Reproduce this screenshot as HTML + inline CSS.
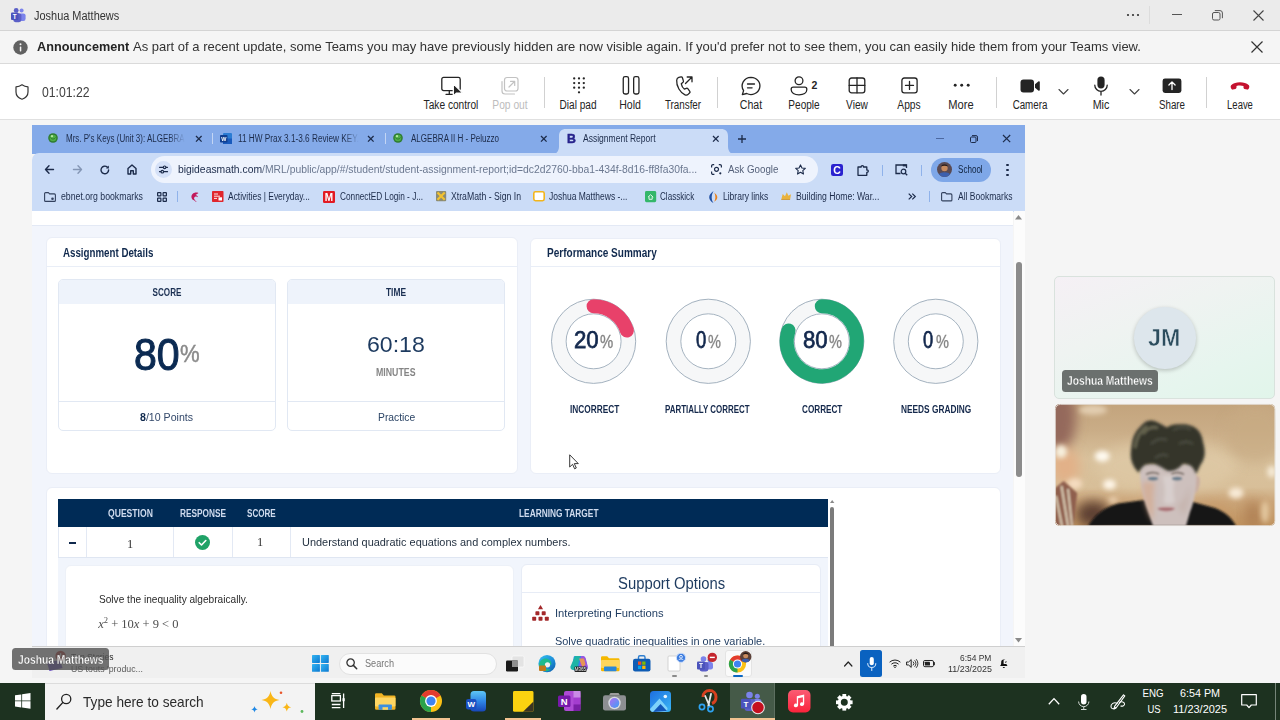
<!DOCTYPE html>
<html lang="en">
<head>
<meta charset="utf-8">
<title>Joshua Matthews</title>
<style>
*{box-sizing:border-box;margin:0;padding:0}
html,body{width:1280px;height:720px;overflow:hidden;background:#f5f5f5;font-family:"Liberation Sans",sans-serif;color:#242424}
.abs{position:absolute}
.t{position:absolute;white-space:nowrap;line-height:1}
svg{position:absolute;overflow:visible}
.clip{position:absolute;left:0;top:0;width:1280px;overflow:hidden}
.blur{filter:blur(.45px)}
</style>
</head>
<body>
<div class="abs" style="left:0px;top:0px;width:1280px;height:30px;background:#ebebeb;"></div>
<div class="abs" style="left:0px;top:30px;width:1280px;height:1px;background:#d4d4d4;"></div>
<svg style="left:11px;top:8px;" width="15" height="15" viewBox="0 0 15 15"><circle cx="10.6" cy="2.6" r="2" fill="#7b83eb"/><circle cx="5.2" cy="2.4" r="2.4" fill="#5b5fc7"/><rect x="8" y="5.4" width="6.6" height="7.6" rx="2.2" fill="#7b83eb"/><rect x="2.2" y="5.2" width="8.2" height="9" rx="2.4" fill="#5b5fc7"/><rect x="0" y="4.6" width="7.4" height="7.4" rx="1" fill="#4b53bc"/><text x="3.7" y="10.6" font-size="6.4" font-weight="700" fill="#fff" text-anchor="middle" font-family="Liberation Sans, sans-serif">T</text></svg>
<span class="t" style="top:10.20px;font-size:12.5px;color:#333;left:34px;transform-origin:0 50%;transform:scaleX(0.8763);">Joshua Matthews</span>
<svg style="left:1126px;top:13px;" width="14" height="4" viewBox="0 0 14 4"><circle cx="2" cy="2" r="1.1" fill="#333"/><circle cx="7" cy="2" r="1.1" fill="#333"/><circle cx="12" cy="2" r="1.1" fill="#333"/></svg>
<div class="abs" style="left:1149px;top:6px;width:1px;height:18px;background:#dcdcdc;"></div>
<div class="abs" style="left:1172px;top:14px;width:10px;height:1px;background:#555;"></div>
<svg style="left:1212px;top:10px;" width="11" height="11" viewBox="0 0 11 11"><rect x="0.5" y="2.5" width="7.5" height="7.5" rx="1.5" fill="none" stroke="#555" stroke-width="1"/><path d="M2.8 .6h5.2a2.4 2.4 0 0 1 2.4 2.4v5.2" fill="none" stroke="#555" stroke-width="1"/></svg>
<svg style="left:1253px;top:10px;" width="11" height="11" viewBox="0 0 11 11"><path d="M.5 .5l10 10M10.5 .5l-10 10" stroke="#444" stroke-width="1.1" fill="none"/></svg>
<div class="abs" style="left:0px;top:31px;width:1280px;height:32px;background:#f5f5f5;"></div>
<div class="abs" style="left:0px;top:63px;width:1280px;height:1px;background:#dadada;"></div>
<svg style="left:13px;top:40px;" width="15" height="15" viewBox="0 0 15 15"><circle cx="7.5" cy="7.5" r="7.2" fill="#616161"/><rect x="6.8" y="6.4" width="1.5" height="5" rx=".6" fill="#f5f5f5"/><circle cx="7.5" cy="4.2" r="1" fill="#f5f5f5"/></svg>
<span class="t" style="top:40.41px;font-size:13.5px;color:#242424;font-weight:700;left:37px;transform-origin:0 50%;transform:scaleX(0.9388);">Announcement</span>
<span class="t" style="top:40.41px;font-size:13.5px;color:#333;left:133px;transform-origin:0 50%;transform:scaleX(0.9637);">As part of a recent update, some Teams you may have previously hidden are now visible again. If you'd prefer not to see them, you can easily hide them from your Teams view.</span>
<svg style="left:1251px;top:41px;" width="12" height="12" viewBox="0 0 12 12"><path d="M.5 .5l11 11M11.5 .5l-11 11" stroke="#333" stroke-width="1.2" fill="none"/></svg>
<div class="abs" style="left:0px;top:64px;width:1280px;height:55px;background:#fff;"></div>
<div class="abs" style="left:0px;top:119px;width:1280px;height:1px;background:#e0e0e0;"></div>
<svg style="left:14.5px;top:84.2px;" width="14" height="16" viewBox="0 0 14 16"><path d="M7 .8c1.8 1.3 3.8 2 6 2.1v5c0 3.5-2.300 6-6 7.300-3.700-1.300-6-3.800-6-7.300v-5c2.200-.1 4.200-.8 6-2.100z" fill="none" stroke="#333" stroke-width="1.2" stroke-linejoin="round"/></svg>
<span class="t" style="top:85.37px;font-size:14px;color:#424242;left:42px;transform-origin:0 50%;transform:scaleX(0.8727);">01:01:22</span>
<svg style="left:439px;top:73.5px;" width="24" height="24" viewBox="0 0 24 24"><rect x="2.800" y="3.400" width="18.400" height="13.200" rx="1.800" fill="none" stroke="#242424" stroke-width="1.3" stroke-linecap="round" stroke-linejoin="round"/><path d="M7 20.300h7M10.300 16.800v3.500" fill="none" stroke="#242424" stroke-width="1.3" stroke-linecap="round" stroke-linejoin="round"/><path d="M14.300 9.900v12.200l3.300-3h6.200z" fill="#242424" stroke="#fff" stroke-width="1.300" stroke-linejoin="round"/></svg>
<span class="t" style="top:99.14px;font-size:12px;color:#242424;left:451px;transform-origin:50% 50%;transform:translateX(-50%) scaleX(0.8462);">Take control</span>
<svg style="left:498px;top:73.5px;" width="24" height="24" viewBox="0 0 24 24"><rect x="6.500" y="3.500" width="13.500" height="13.500" rx="2.500" fill="none" stroke="#c2c2c2" stroke-width="1.2" stroke-linecap="round" stroke-linejoin="round"/><path d="M4 7.500v9.500a3 3 0 0 0 3 3h9.500" fill="none" stroke="#c2c2c2" stroke-width="1.2" stroke-linecap="round" stroke-linejoin="round"/><path d="M11 13l5.500-5.500M12.500 7.300h4.200v4.200" fill="none" stroke="#c2c2c2" stroke-width="1.2" stroke-linecap="round" stroke-linejoin="round"/></svg>
<span class="t" style="top:99.14px;font-size:12px;color:#bdbdbd;left:510px;transform-origin:50% 50%;transform:translateX(-50%) scaleX(0.8537);">Pop out</span>
<div class="abs" style="left:544px;top:77px;width:1px;height:31px;background:#d1d1d1;"></div>
<svg style="left:566px;top:73.5px;" width="24" height="24" viewBox="0 0 24 24"><circle cx="8.2" cy="4.4" r="1.150" fill="#242424"/><circle cx="8.2" cy="9.05" r="1.150" fill="#242424"/><circle cx="8.2" cy="13.7" r="1.150" fill="#242424"/><circle cx="13" cy="4.4" r="1.150" fill="#242424"/><circle cx="13" cy="9.05" r="1.150" fill="#242424"/><circle cx="13" cy="13.7" r="1.150" fill="#242424"/><circle cx="17.8" cy="4.4" r="1.150" fill="#242424"/><circle cx="17.8" cy="9.05" r="1.150" fill="#242424"/><circle cx="17.8" cy="13.7" r="1.150" fill="#242424"/><circle cx="13" cy="18.350" r="1.150" fill="#242424"/></svg>
<span class="t" style="top:99.14px;font-size:12px;color:#242424;left:578px;transform-origin:50% 50%;transform:translateX(-50%) scaleX(0.8409);">Dial pad</span>
<svg style="left:618px;top:73.5px;" width="24" height="24" viewBox="0 0 24 24"><rect x="5.250" y="2.600" width="5.300" height="17.400" rx="1.800" fill="none" stroke="#242424" stroke-width="1.3" stroke-linecap="round" stroke-linejoin="round"/><rect x="15.650" y="2.600" width="5.300" height="17.400" rx="1.800" fill="none" stroke="#242424" stroke-width="1.3" stroke-linecap="round" stroke-linejoin="round"/></svg>
<span class="t" style="top:99.14px;font-size:12px;color:#242424;left:630px;transform-origin:50% 50%;transform:translateX(-50%) scaleX(0.8800);">Hold</span>
<svg style="left:671px;top:73.5px;" width="24" height="24" viewBox="0 0 24 24"><path d="M7.800 3.400l2.300-.5c.6-.1 1.100.2 1.300.8l1 3.200c.2.500 0 1-.4 1.400l-1.700 1.500c.5 2.500 1.500 4.200 3 5.300l2.100-.8c.5-.2 1.100 0 1.400.4l2 2.600c.4.500.3 1.100-.1 1.500l-1.300 1.300c-.9.900-2.200 1.200-3.400.7-4.700-1.900-8.800-8.700-8.300-14.500.1-1.400 1-2.500 2.100-2.900z" fill="none" stroke="#242424" stroke-width="1.3" stroke-linecap="round" stroke-linejoin="round"/><path d="M14.500 9.500l6.500-6.500M16.200 3h4.800v4.800" fill="none" stroke="#242424" stroke-width="1.3" stroke-linecap="round" stroke-linejoin="round"/></svg>
<span class="t" style="top:99.14px;font-size:12px;color:#242424;left:683px;transform-origin:50% 50%;transform:translateX(-50%) scaleX(0.8182);">Transfer</span>
<div class="abs" style="left:717px;top:77px;width:1px;height:31px;background:#d1d1d1;"></div>
<svg style="left:739px;top:73.5px;" width="24" height="24" viewBox="0 0 24 24"><path d="M12 3.300a9 8.600 0 1 1-4.300 16.200l-4.400 1.200 1.300-4.100a9 8.600 0 0 1 7.400-13.300z" fill="none" stroke="#242424" stroke-width="1.3" stroke-linecap="round" stroke-linejoin="round"/><path d="M8.500 10h7M8.500 13.800h4.600" fill="none" stroke="#242424" stroke-width="1.3" stroke-linecap="round" stroke-linejoin="round"/></svg>
<span class="t" style="top:99.14px;font-size:12px;color:#242424;left:751px;transform-origin:50% 50%;transform:translateX(-50%) scaleX(0.8800);">Chat</span>
<svg style="left:787px;top:73.5px;" width="24" height="24" viewBox="0 0 24 24"><circle cx="12" cy="6.800" r="3.900" fill="none" stroke="#242424" stroke-width="1.3" stroke-linecap="round" stroke-linejoin="round"/><path d="M6.200 13.200h11.600a2 2 0 0 1 2 2v.6c0 3-3.200 5-7.800 5s-7.800-2-7.800-5v-.6a2 2 0 0 1 2-2z" fill="none" stroke="#242424" stroke-width="1.3" stroke-linecap="round" stroke-linejoin="round"/></svg>
<span class="t" style="top:79.88px;font-size:10.5px;color:#242424;font-weight:700;left:814.5px;transform-origin:50% 50%;transform:translateX(-50%) scaleX(1.0000);">2</span>
<span class="t" style="top:99.14px;font-size:12px;color:#242424;left:804px;transform-origin:50% 50%;transform:translateX(-50%) scaleX(0.8378);">People</span>
<svg style="left:845px;top:73.5px;" width="24" height="24" viewBox="0 0 24 24"><rect x="4.200" y="4" width="15.600" height="14.800" rx="2.400" fill="none" stroke="#242424" stroke-width="1.3" stroke-linecap="round" stroke-linejoin="round"/><path d="M12 4v14.800M4.200 11.400h15.600" fill="none" stroke="#242424" stroke-width="1.3" stroke-linecap="round" stroke-linejoin="round"/></svg>
<span class="t" style="top:99.14px;font-size:12px;color:#242424;left:857px;transform-origin:50% 50%;transform:translateX(-50%) scaleX(0.8462);">View</span>
<svg style="left:897px;top:73.5px;" width="24" height="24" viewBox="0 0 24 24"><rect x="4.900" y="4" width="15.200" height="14.800" rx="2.400" fill="none" stroke="#242424" stroke-width="1.3" stroke-linecap="round" stroke-linejoin="round"/><path d="M12.500 7.400v8M8.500 11.400h8" fill="none" stroke="#242424" stroke-width="1.3" stroke-linecap="round" stroke-linejoin="round"/></svg>
<span class="t" style="top:99.14px;font-size:12px;color:#242424;left:909px;transform-origin:50% 50%;transform:translateX(-50%) scaleX(0.8519);">Apps</span>
<svg style="left:949px;top:73.5px;" width="24" height="24" viewBox="0 0 24 24"><circle cx="6.200" cy="11.300" r="1.450" fill="#242424"/><circle cx="12.700" cy="11.300" r="1.450" fill="#242424"/><circle cx="19.200" cy="11.300" r="1.450" fill="#242424"/></svg>
<span class="t" style="top:99.14px;font-size:12px;color:#242424;left:961px;transform-origin:50% 50%;transform:translateX(-50%) scaleX(0.9259);">More</span>
<div class="abs" style="left:996px;top:77px;width:1px;height:31px;background:#d1d1d1;"></div>
<svg style="left:1018px;top:73.5px;" width="24" height="24" viewBox="0 0 24 24"><rect x="2.500" y="5.400" width="13.500" height="13.200" rx="3" fill="#242424"/><path d="M17 10.200l3.600-2.900c.5-.4 1.200 0 1.200.6v8.200c0 .6-.7 1-1.200.6l-3.600-2.900z" fill="#242424"/></svg>
<span class="t" style="top:99.14px;font-size:12px;color:#242424;left:1030px;transform-origin:50% 50%;transform:translateX(-50%) scaleX(0.8140);">Camera</span>
<svg style="left:1058px;top:88px;" width="11" height="8" viewBox="0 0 11 8"><path d="M1 1.500l4.500 4.500 4.500-4.500" fill="none" stroke="#424242" stroke-width="1.100" stroke-linecap="round" stroke-linejoin="round"/></svg>
<svg style="left:1089px;top:73.5px;" width="24" height="24" viewBox="0 0 24 24"><rect x="8.400" y="2.400" width="7.200" height="12" rx="3.600" fill="#242424"/><path d="M5.800 11.200a6.200 6.200 0 0 0 12.400 0M12 17.600v3.400" fill="none" stroke="#242424" stroke-width="1.3" stroke-linecap="round" stroke-linejoin="round"/></svg>
<span class="t" style="top:99.14px;font-size:12px;color:#242424;left:1101px;transform-origin:50% 50%;transform:translateX(-50%) scaleX(0.8947);">Mic</span>
<svg style="left:1129px;top:88px;" width="11" height="8" viewBox="0 0 11 8"><path d="M1 1.500l4.500 4.500 4.500-4.500" fill="none" stroke="#424242" stroke-width="1.100" stroke-linecap="round" stroke-linejoin="round"/></svg>
<svg style="left:1160px;top:73.5px;" width="24" height="24" viewBox="0 0 24 24"><rect x="2.600" y="4.600" width="18.800" height="14.400" rx="2.400" fill="#242424"/><path d="M12 15.600v-7.400M8.900 11l3.100-3.100 3.100 3.100" fill="none" stroke="#fff" stroke-width="1.300" stroke-linecap="round" stroke-linejoin="round"/></svg>
<span class="t" style="top:99.14px;font-size:12px;color:#242424;left:1172px;transform-origin:50% 50%;transform:translateX(-50%) scaleX(0.8125);">Share</span>
<div class="abs" style="left:1206px;top:77px;width:1px;height:31px;background:#d1d1d1;"></div>
<svg style="left:1228px;top:73.5px;" width="24" height="24" viewBox="0 0 24 24"><path d="M12 8.200c-3.600 0-6.600.9-8.600 2.700-.7.600-.9 1.600-.6 2.500l.5 1.400c.2.600.9 1 1.500.8l2.700-.7c.6-.2 1-.7 1-1.300v-1.700c1.100-.4 2.300-.5 3.500-.5s2.400.2 3.500.5v1.700c0 .6.400 1.200 1 1.300l2.700.7c.6.200 1.300-.2 1.500-.8l.5-1.400c.3-.9.100-1.900-.6-2.500-2-1.800-5-2.700-8.600-2.700z" fill="#c4122f"/></svg>
<span class="t" style="top:99.14px;font-size:12px;color:#242424;left:1240px;transform-origin:50% 50%;transform:translateX(-50%) scaleX(0.7879);">Leave</span>
<div class="blur"><div class="abs" style="left:32px;top:125px;width:993px;height:29px;background:#84aae9;"></div>
<div class="abs" style="left:32px;top:153px;width:993px;height:58.5px;background:#cbdcf7;border-radius:7px 0 0 0;"></div>
<svg style="left:48px;top:133px;" width="10" height="10" viewBox="0 0 10 10"><circle cx="5" cy="5" r="4.800" fill="#2f7d32"/><circle cx="5" cy="5" r="3.300" fill="#4fae45"/><path d="M2.500 4.500c1.200 2 3.800 2 5 0" stroke="#2c7a2c" stroke-width="1" fill="none"/><circle cx="4" cy="3.200" r="1.100" fill="#b6e8a6"/></svg>
<span class="t" style="top:134.02px;font-size:10px;color:#1c2b4a;left:65.5px;transform-origin:0 50%;transform:scaleX(0.7987);-webkit-mask-image:linear-gradient(90deg,#000 86%,transparent);mask-image:linear-gradient(90deg,#000 86%,transparent);">Mrs. P's Keys (Unit 3): ALGEBRA</span>
<svg style="left:195.7px;top:136.1px;" width="5.6" height="5.6" viewBox="0 0 5.6 5.6"><path d="M0 0L5.6 5.6M5.6 0L0 5.6" stroke="#1c2b4a" stroke-width="1.3" fill="none"/></svg>
<div class="abs" style="left:212px;top:133px;width:1px;height:11px;background:#c3d5f4;"></div>
<svg style="left:220px;top:133px;" width="12" height="11" viewBox="0 0 12 11"><rect x="3" y="0" width="9" height="11" rx="1" fill="#2b7cd3"/><rect x="3" y="5.500" width="9" height="5.500" fill="#185abd"/><rect x="0" y="2" width="7.500" height="7.500" rx=".8" fill="#103f91"/><text x="3.750" y="8" font-size="5.500" font-weight="700" fill="#fff" text-anchor="middle" font-family="Liberation Sans, sans-serif">W</text></svg>
<span class="t" style="top:134.02px;font-size:10px;color:#1c2b4a;left:238px;transform-origin:0 50%;transform:scaleX(0.8231);-webkit-mask-image:linear-gradient(90deg,#000 88%,transparent);mask-image:linear-gradient(90deg,#000 88%,transparent);">11 HW Prax 3.1-3.6 Review KEY.</span>
<svg style="left:368.2px;top:136.1px;" width="5.6" height="5.6" viewBox="0 0 5.6 5.6"><path d="M0 0L5.6 5.6M5.6 0L0 5.6" stroke="#1c2b4a" stroke-width="1.3" fill="none"/></svg>
<div class="abs" style="left:385px;top:133px;width:1px;height:11px;background:#c3d5f4;"></div>
<svg style="left:393px;top:133px;" width="10" height="10" viewBox="0 0 10 10"><circle cx="5" cy="5" r="4.800" fill="#2f7d32"/><circle cx="5" cy="5" r="3.300" fill="#4fae45"/><path d="M2.500 4.500c1.200 2 3.800 2 5 0" stroke="#2c7a2c" stroke-width="1" fill="none"/><circle cx="4" cy="3.200" r="1.100" fill="#b6e8a6"/></svg>
<span class="t" style="top:134.02px;font-size:10px;color:#1c2b4a;left:410.5px;transform-origin:0 50%;transform:scaleX(0.8045);">ALGEBRA II H - Peluzzo</span>
<svg style="left:540.7px;top:136.1px;" width="5.6" height="5.6" viewBox="0 0 5.6 5.6"><path d="M0 0L5.6 5.6M5.6 0L0 5.6" stroke="#1c2b4a" stroke-width="1.3" fill="none"/></svg>
<svg style="left:551px;top:128.5px;" width="185" height="25.5" viewBox="0 0 185 25.5"><path d="M0 25.500c5 0 8-3 8-8v-10.500c0-4.500 2.500-7 7-7h155c4.500 0 7 2.500 7 7v10.500c0 5 3 8 8 8z" fill="#cbdcf7"/></svg>
<span class="t" style="top:132.26px;font-size:13px;color:#27238c;font-weight:700;left:566.8px;transform-origin:0 50%;transform:scaleX(0.9444);-webkit-text-stroke:.5px #27238c;">B</span>
<span class="t" style="top:134.02px;font-size:10px;color:#1c2b4a;left:583px;transform-origin:0 50%;transform:scaleX(0.8529);">Assignment Report</span>
<svg style="left:713.2px;top:136.1px;" width="5.6" height="5.6" viewBox="0 0 5.6 5.6"><path d="M0 0L5.6 5.6M5.6 0L0 5.6" stroke="#1c2b4a" stroke-width="1.3" fill="none"/></svg>
<svg style="left:738px;top:134.5px;" width="8" height="8" viewBox="0 0 8 8"><path d="M4 0v8M0 4h8" stroke="#1c2b4a" stroke-width="1.300" fill="none"/></svg>
<div class="abs" style="left:936px;top:137.5px;width:8px;height:1px;background:#4c68a0;"></div>
<svg style="left:969.5px;top:134.5px;" width="8" height="8" viewBox="0 0 8 8"><rect x=".5" y="2" width="5.500" height="5.500" rx="1" fill="none" stroke="#1c2b4a" stroke-width="1"/><path d="M2 .6h4a1.500 1.500 0 0 1 1.500 1.500v4" fill="none" stroke="#1c2b4a" stroke-width="1"/></svg>
<svg style="left:1003.4px;top:135.3px;" width="7.2" height="7.2" viewBox="0 0 7.2 7.2"><path d="M0 0L7.2 7.2M7.2 0L0 7.2" stroke="#1c2b4a" stroke-width="1.2" fill="none"/></svg>
<svg style="left:45px;top:165px;" width="9" height="9" viewBox="0 0 9 9"><path d="M8.500 4.500h-8M4 .8L.5 4.500 4 8.200" fill="none" stroke="#1c2b4a" stroke-width="1.400" stroke-linecap="round" stroke-linejoin="round"/></svg>
<svg style="left:72.5px;top:165px;" width="9" height="9" viewBox="0 0 9 9"><path d="M.5 4.500h8M5 .8l3.500 3.700L5 8.200" fill="none" stroke="#8496b5" stroke-width="1.400" stroke-linecap="round" stroke-linejoin="round"/></svg>
<svg style="left:100px;top:164.5px;" width="10" height="10" viewBox="0 0 10 10"><path d="M8.600 5a3.800 3.800 0 1 1-1.300-2.900" fill="none" stroke="#1c2b4a" stroke-width="1.400" stroke-linecap="round" stroke-linejoin="round"/><path d="M8.900 .6v2.800h-2.800z" fill="#1c2b4a"/></svg>
<svg style="left:127px;top:164px;" width="10" height="11" viewBox="0 0 10 11"><path d="M1 4.600L5 1l4 3.600v5.400h-2.700v-3.200h-2.600v3.200h-2.700z" fill="none" stroke="#1c2b4a" stroke-width="1.400" stroke-linecap="round" stroke-linejoin="round"/></svg>
<div class="abs" style="left:151px;top:156px;width:667px;height:27px;background:#eef3fd;border-radius:13.500px;"></div>
<svg style="left:154.5px;top:161px;" width="17" height="17" viewBox="0 0 17 17"><circle cx="8.500" cy="8.500" r="8.500" fill="#d5e1f8"/><path d="M4.500 6.300h3.500M11.300 6.300h1.200M4.500 10.700h1.200M9 10.700h3.500" stroke="#1c2b4a" stroke-width="1.200" stroke-linecap="round"/><circle cx="9.600" cy="6.300" r="1.300" fill="none" stroke="#1c2b4a" stroke-width="1.100"/><circle cx="7.300" cy="10.700" r="1.300" fill="none" stroke="#1c2b4a" stroke-width="1.100"/></svg>
<span class="t" style="top:164.13px;font-size:11px;color:#6b7890;left:178px;transform-origin:0 50%;transform:scaleX(0.9411);"><span style="color:#1c2b4a">bigideasmath.com</span>/MRL/public/app/#/student/student-assignment-report;id=dc2d2760-bba1-434f-8d16-ff8fa30fa...</span>
<svg style="left:710.5px;top:164px;" width="11" height="11" viewBox="0 0 11 11"><path d="M.6 3.400v-1.400a1.400 1.400 0 0 1 1.400-1.400h1.200M7.800 .6h1.200a1.400 1.400 0 0 1 1.400 1.400v1.400M.6 7.600v1.400a1.400 1.400 0 0 0 1.400 1.400h1.400" fill="none" stroke="#1c2b4a" stroke-width="1.200"/><circle cx="5.500" cy="5.300" r="2" fill="none" stroke="#1c2b4a" stroke-width="1.200"/><circle cx="9.300" cy="9.300" r="1.100" fill="#1c2b4a"/></svg>
<span class="t" style="top:164.13px;font-size:11px;color:#55617a;left:727.5px;transform-origin:0 50%;transform:scaleX(0.8860);">Ask Google</span>
<svg style="left:794.5px;top:164px;" width="11" height="11" viewBox="0 0 11 11"><path d="M5.500 .9l1.450 3.100 3.350.4-2.500 2.300.68 3.350-2.980-1.700-2.980 1.700.68-3.350-2.500-2.300 3.350-.4z" fill="none" stroke="#1c2b4a" stroke-width="1.100" stroke-linejoin="round"/></svg>
<svg style="left:830.5px;top:163.5px;" width="12" height="12" viewBox="0 0 12 12"><rect width="12" height="12" rx="2.200" fill="#2a22cf"/><text x="6" y="9.600" font-size="10.500" font-weight="700" fill="#fff" text-anchor="middle" font-family="Liberation Sans, sans-serif">C</text></svg>
<svg style="left:857px;top:163.5px;" width="13" height="12" viewBox="0 0 13 12"><path d="M1 3h3.200c-.5-1.800 2.800-1.800 2.300 0h3.300v3c1.900-.5 1.900 2.800 0 2.300v3h-8.800z" fill="none" stroke="#1c2b4a" stroke-width="1.300" stroke-linejoin="round"/></svg>
<div class="abs" style="left:882px;top:164.5px;width:1px;height:11px;background:#8fb2ea;"></div>
<svg style="left:895px;top:164px;" width="13" height="12" viewBox="0 0 13 12"><path d="M5.500 9.500h-4.500v-8.500h10.500v3" fill="none" stroke="#1c2b4a" stroke-width="1.300"/><rect x="7.800" y=".4" width="3.800" height="2" fill="#1c2b4a"/><circle cx="8.500" cy="7.500" r="2.300" fill="none" stroke="#1c2b4a" stroke-width="1.200"/><path d="M10.200 9.200l2 2" stroke="#1c2b4a" stroke-width="1.300"/></svg>
<div class="abs" style="left:921px;top:164.5px;width:1px;height:11px;background:#8fb2ea;"></div>
<div class="abs" style="left:930.5px;top:157.5px;width:60.5px;height:24.5px;background:#7ea7e8;border-radius:12.500px;"></div>
<svg style="left:937px;top:162px;" width="15" height="15" viewBox="0 0 15 15"><circle cx="7.500" cy="7.500" r="7.500" fill="#5a4a52"/><circle cx="7.500" cy="6" r="3.200" fill="#c78a5e"/><path d="M2 12.500c1-3 10-3 11 0a7.500 7.500 0 0 1-11 0z" fill="#3c5fae"/><path d="M4 4.500c1-3 6-3 7 0-2-1-5-1-7 0z" fill="#2a1d1a"/></svg>
<span class="t" style="top:164.62px;font-size:10px;color:#10233f;left:957.5px;transform-origin:0 50%;transform:scaleX(0.8065);">School</span>
<div class="abs" style="left:1006.3px;top:163.5px;width:2.4px;height:2.4px;background:#1c2b4a;border-radius:50%;"></div>
<div class="abs" style="left:1006.3px;top:168.5px;width:2.4px;height:2.4px;background:#1c2b4a;border-radius:50%;"></div>
<div class="abs" style="left:1006.3px;top:173.5px;width:2.4px;height:2.4px;background:#1c2b4a;border-radius:50%;"></div>
<svg style="left:43.5px;top:191.5px;" width="12" height="10" viewBox="0 0 12 10"><path d="M.6 1.600a1 1 0 0 1 1-1h2.800l1.200 1.300h4.800a1 1 0 0 1 1 1v5.500a1 1 0 0 1-1 1h-8.800a1 1 0 0 1-1-1z" fill="none" stroke="#33415e" stroke-width="1.100" stroke-linejoin="round"/><circle cx="8.500" cy="6.800" r="1.300" fill="#33415e"/></svg>
<span class="t" style="top:192.12px;font-size:10px;color:#1c2b4a;left:61px;transform-origin:0 50%;transform:scaleX(0.8723);">ebnet.org bookmarks</span>
<svg style="left:156.5px;top:191.5px;" width="10" height="10" viewBox="0 0 10 10"><rect x="0.6" y="0.6" width="3.300" height="3.300" rx=".5" fill="none" stroke="#1c2b4a" stroke-width="1.200"/><rect x="0.6" y="6.1" width="3.300" height="3.300" rx=".5" fill="none" stroke="#1c2b4a" stroke-width="1.200"/><rect x="6.1" y="0.6" width="3.300" height="3.300" rx=".5" fill="none" stroke="#1c2b4a" stroke-width="1.200"/><rect x="6.1" y="6.1" width="3.300" height="3.300" rx=".5" fill="none" stroke="#1c2b4a" stroke-width="1.200"/></svg>
<div class="abs" style="left:177px;top:191px;width:1px;height:11px;background:#8fb2ea;"></div>
<svg style="left:190.5px;top:191.5px;" width="8" height="10" viewBox="0 0 8 10"><path d="M7.500 1c-4-1.500-7.500 1-7 4.500.3 2 2 3.200 3.500 2.500-1.200-.8-1.300-2.600 0-3.300 1-.5 2.300-.2 3 .5-.3-1.200-1.300-2-2.500-2.100 1-.9 2.200-1.400 3-2.100z" fill="#c2185b"/><path d="M3.500 8.200l1.500 1.500" stroke="#c2185b" stroke-width="1"/></svg>
<svg style="left:212px;top:191px;" width="11.5" height="11" viewBox="0 0 11.5 11"><rect width="11.500" height="11" rx=".8" fill="#e0262d"/><path d="M2 3h4M2 5.200h6M2 7.400h3" stroke="#fff" stroke-width=".9"/><rect x="6.500" y="6.300" width="3.500" height="3.200" fill="#fff"/></svg>
<span class="t" style="top:192.12px;font-size:10px;color:#1c2b4a;left:227.5px;transform-origin:0 50%;transform:scaleX(0.8454);">Activities | Everyday...</span>
<svg style="left:323px;top:190.5px;" width="12" height="12" viewBox="0 0 12 12"><rect width="12" height="12" rx="1.200" fill="#e21b23"/><text x="6" y="9.800" font-size="10" font-weight="700" fill="#fff" text-anchor="middle" font-family="Liberation Sans, sans-serif">M</text></svg>
<span class="t" style="top:192.12px;font-size:10px;color:#1c2b4a;left:340px;transform-origin:0 50%;transform:scaleX(0.8267);">ConnectED Login - J...</span>
<svg style="left:435.8px;top:191.2px;" width="10.2" height="10.2" viewBox="0 0 10.2 10.2"><rect width="10.200" height="10.200" rx="1" fill="#8b8b74"/><path d="M1.500 1.500l7.200 7.200M8.700 1.500l-7.200 7.200" stroke="#f2c230" stroke-width="2.200"/></svg>
<span class="t" style="top:192.12px;font-size:10px;color:#1c2b4a;left:450.8px;transform-origin:0 50%;transform:scaleX(0.8691);">XtraMath - Sign In</span>
<svg style="left:532.5px;top:191px;" width="12" height="10.5" viewBox="0 0 12 10.5"><rect x=".8" y=".8" width="10.400" height="8.900" rx="1.600" fill="#fff" stroke="#f2b51d" stroke-width="1.600"/></svg>
<span class="t" style="top:192.12px;font-size:10px;color:#1c2b4a;left:548.8px;transform-origin:0 50%;transform:scaleX(0.8500);">Joshua Matthews -...</span>
<svg style="left:644.5px;top:190.8px;" width="11.2" height="11.2" viewBox="0 0 11.2 11.2"><rect width="11.200" height="11.200" rx="1.400" fill="#34b76a"/><path d="M3 6.200l2.600-2.500 2.600 2.500M4 5.500v2.800h3.200v-2.800" fill="none" stroke="#dff7e8" stroke-width="1"/></svg>
<span class="t" style="top:192.12px;font-size:10px;color:#1c2b4a;left:660px;transform-origin:0 50%;transform:scaleX(0.8095);">Classkick</span>
<svg style="left:708.8px;top:190.5px;" width="8.5" height="12" viewBox="0 0 8.5 12"><path d="M4.500 0c-2.500 1.800-4.300 3.800-4.300 6.300 0 2.400 1.700 4.500 4.300 5.700-1.200-1.600-1.800-3.400-1.800-5.500s.6-4.300 1.800-6.500z" fill="#1f4fa3"/><path d="M5.200 1.500c1.800 1.500 3.100 3 3.100 4.800s-1.200 3.400-3.100 4.400c.8-1.300 1.200-2.800 1.200-4.400s-.4-3.300-1.200-4.800z" fill="#e9811c"/></svg>
<span class="t" style="top:192.12px;font-size:10px;color:#1c2b4a;left:723px;transform-origin:0 50%;transform:scaleX(0.8491);">Library links</span>
<svg style="left:781px;top:192px;" width="10.5" height="8" viewBox="0 0 10.5 8"><path d="M.3 7.500l1.400-5.500 2.300 2.300 1.800-4 1.600 3.400 2.600-1.400-.9 5.200z" fill="#e9b23c"/><path d="M.3 7.500h8.800" stroke="#c98b1d" stroke-width=".7"/></svg>
<span class="t" style="top:192.12px;font-size:10px;color:#1c2b4a;left:796px;transform-origin:0 50%;transform:scaleX(0.8646);">Building Home: War...</span>
<svg style="left:908px;top:193px;" width="8" height="7" viewBox="0 0 8 7"><path d="M.7 .6l3 2.900-3 2.900M4.300 .6l3 2.900-3 2.900" fill="none" stroke="#1c2b4a" stroke-width="1.200"/></svg>
<div class="abs" style="left:928.5px;top:191px;width:1px;height:11px;background:#8fb2ea;"></div>
<svg style="left:940.8px;top:191.5px;" width="11.5" height="9.5" viewBox="0 0 11.5 9.5"><path d="M.6 1.600a1 1 0 0 1 1-1h2.700l1.200 1.300h4.400a1 1 0 0 1 1 1v5a1 1 0 0 1-1 1h-8.300a1 1 0 0 1-1-1z" fill="none" stroke="#33415e" stroke-width="1.100" stroke-linejoin="round"/></svg>
<span class="t" style="top:192.12px;font-size:10px;color:#1c2b4a;left:958px;transform-origin:0 50%;transform:scaleX(0.8516);">All Bookmarks</span>
</div><div class="clip blur" style="height:646px"><div class="abs" style="left:32px;top:211px;width:981px;height:435px;background:#f2f5fc;"></div>
<div class="abs" style="left:32px;top:211px;width:981px;height:14px;background:#fff;"></div>
<div class="abs" style="left:32px;top:225px;width:981px;height:1px;background:#e3e9f5;"></div>
<div class="abs" style="left:45.5px;top:237.3px;width:472px;height:236.7px;background:#fff;border:1px solid #eaeef7;border-radius:6px;"></div>
<span class="t" style="top:247.34px;font-size:12px;color:#10294d;font-weight:700;left:63.2px;transform-origin:0 50%;transform:scaleX(0.8108);">Assignment Details</span>
<div class="abs" style="left:46px;top:266px;width:471.5px;height:1px;background:#e9eef7;"></div>
<div class="abs" style="left:57.5px;top:278.7px;width:218px;height:152.8px;background:#fff;border:1px solid #e1e8f3;border-radius:5px;overflow:hidden;"></div>
<div class="abs" style="left:58.5px;top:279.7px;width:216px;height:24.8px;background:#eef3fb;border-radius:4px 4px 0 0;"></div>
<div class="abs" style="left:58.5px;top:401px;width:216px;height:1px;background:#e1e8f3;"></div>
<div class="abs" style="left:287px;top:278.7px;width:218px;height:152.8px;background:#fff;border:1px solid #e1e8f3;border-radius:5px;overflow:hidden;"></div>
<div class="abs" style="left:288px;top:279.7px;width:216px;height:24.8px;background:#eef3fb;border-radius:4px 4px 0 0;"></div>
<div class="abs" style="left:288px;top:401px;width:216px;height:1px;background:#e1e8f3;"></div>
<span class="t" style="top:287.08px;font-size:10.5px;color:#1a2f52;font-weight:700;left:166.5px;transform-origin:50% 50%;transform:translateX(-50%) scaleX(0.7703);">SCORE</span>
<span class="t" style="top:287.08px;font-size:10.5px;color:#1a2f52;font-weight:700;left:396.2px;transform-origin:50% 50%;transform:translateX(-50%) scaleX(0.8000);">TIME</span>
<span class="t" style="top:332.44px;font-size:45px;color:#0b2a52;left:133.9px;transform-origin:0 50%;transform:scaleX(0.9120);-webkit-text-stroke:1.100px #0b2a52;">80</span>
<span class="t" style="top:343.08px;font-size:23px;color:#8a8a8a;left:179.9px;transform-origin:0 50%;transform:scaleX(0.9600);-webkit-text-stroke:.45px #8a8a8a;">%</span>
<span class="t" style="top:411.63px;font-size:11px;color:#33486a;left:139.5px;transform-origin:0 50%;transform:scaleX(0.9636);"><b style="color:#10294d">8</b>/10 Points</span>
<span class="t" style="top:333.32px;font-size:22.7px;color:#1d3a5f;left:367px;transform-origin:0 50%;transform:scaleX(1.0175);">60:18</span>
<span class="t" style="top:367.48px;font-size:10.5px;color:#858585;font-weight:700;left:376.2px;transform-origin:0 50%;transform:scaleX(0.8362);">MINUTES</span>
<span class="t" style="top:411.63px;font-size:11px;color:#2c4566;left:377.5px;transform-origin:0 50%;transform:scaleX(0.9375);">Practice</span>
<div class="abs" style="left:530px;top:237.5px;width:470.5px;height:236.5px;background:#fff;border:1px solid #eaeef7;border-radius:6px;"></div>
<span class="t" style="top:247.34px;font-size:12px;color:#10294d;font-weight:700;left:547px;transform-origin:0 50%;transform:scaleX(0.8359);">Performance Summary</span>
<div class="abs" style="left:530px;top:266px;width:470.5px;height:1px;background:#e9eef7;"></div>
<svg style="left:0px;top:0px;" width="1280" height="720" viewBox="0 0 1280 720"><circle cx="593.6" cy="341.3" r="35" fill="none" stroke="#f6f7f8" stroke-width="14"/><circle cx="593.6" cy="341.3" r="42.100" fill="none" stroke="#8d9eae" stroke-width=".8"/><circle cx="593.6" cy="341.3" r="27.500" fill="none" stroke="#8d9eae" stroke-width=".8"/><path d="M593.60 306.30A35 35 0 0 1 626.89 330.48" fill="none" stroke="#e8416a" stroke-width="14" stroke-linecap="round"/></svg>
<span class="t" style="top:328.10px;font-size:24.6px;color:#13284d;left:574px;transform-origin:0 50%;transform:scaleX(0.9037);-webkit-text-stroke:.75px #13284d;">20</span>
<span class="t" style="top:334.06px;font-size:17.5px;color:#858585;left:600.2px;transform-origin:0 50%;transform:scaleX(0.8500);-webkit-text-stroke:.35px #858585;">%</span>
<svg style="left:0px;top:0px;" width="1280" height="720" viewBox="0 0 1280 720"><circle cx="708.3" cy="341.3" r="35" fill="none" stroke="#f6f7f8" stroke-width="14"/><circle cx="708.3" cy="341.3" r="42.100" fill="none" stroke="#8d9eae" stroke-width=".8"/><circle cx="708.3" cy="341.3" r="27.500" fill="none" stroke="#8d9eae" stroke-width=".8"/></svg>
<span class="t" style="top:328.10px;font-size:24.6px;color:#13284d;left:695.9px;transform-origin:0 50%;transform:scaleX(0.7500);-webkit-text-stroke:.75px #13284d;">0</span>
<span class="t" style="top:334.06px;font-size:17.5px;color:#858585;left:708.2px;transform-origin:0 50%;transform:scaleX(0.8313);-webkit-text-stroke:.35px #858585;">%</span>
<svg style="left:0px;top:0px;" width="1280" height="720" viewBox="0 0 1280 720"><circle cx="821.8" cy="341.3" r="35" fill="none" stroke="#f6f7f8" stroke-width="14"/><circle cx="821.8" cy="341.3" r="42.100" fill="none" stroke="#8d9eae" stroke-width=".8"/><circle cx="821.8" cy="341.3" r="27.500" fill="none" stroke="#8d9eae" stroke-width=".8"/><path d="M821.80 306.30A35 35 0 1 1 788.51 330.48" fill="none" stroke="#21a675" stroke-width="14" stroke-linecap="round"/></svg>
<span class="t" style="top:328.10px;font-size:24.6px;color:#13284d;left:802.6px;transform-origin:0 50%;transform:scaleX(0.9037);-webkit-text-stroke:.75px #13284d;">80</span>
<span class="t" style="top:334.06px;font-size:17.5px;color:#858585;left:828.8px;transform-origin:0 50%;transform:scaleX(0.8313);-webkit-text-stroke:.35px #858585;">%</span>
<svg style="left:0px;top:0px;" width="1280" height="720" viewBox="0 0 1280 720"><circle cx="935.8" cy="341.3" r="35" fill="none" stroke="#f6f7f8" stroke-width="14"/><circle cx="935.8" cy="341.3" r="42.100" fill="none" stroke="#8d9eae" stroke-width=".8"/><circle cx="935.8" cy="341.3" r="27.500" fill="none" stroke="#8d9eae" stroke-width=".8"/></svg>
<span class="t" style="top:328.10px;font-size:24.6px;color:#13284d;left:923.3px;transform-origin:0 50%;transform:scaleX(0.7429);-webkit-text-stroke:.75px #13284d;">0</span>
<span class="t" style="top:334.06px;font-size:17.5px;color:#858585;left:935.5px;transform-origin:0 50%;transform:scaleX(0.8313);-webkit-text-stroke:.35px #858585;">%</span>
<span class="t" style="top:405.12px;font-size:10px;color:#14284b;font-weight:700;left:569.6px;transform-origin:0 50%;transform:scaleX(0.8305);">INCORRECT</span>
<span class="t" style="top:405.12px;font-size:10px;color:#14284b;font-weight:700;left:665.4px;transform-origin:0 50%;transform:scaleX(0.7944);">PARTIALLY CORRECT</span>
<span class="t" style="top:405.12px;font-size:10px;color:#14284b;font-weight:700;left:801.9px;transform-origin:0 50%;transform:scaleX(0.8163);">CORRECT</span>
<span class="t" style="top:405.12px;font-size:10px;color:#14284b;font-weight:700;left:901.2px;transform-origin:0 50%;transform:scaleX(0.8310);">NEEDS GRADING</span>
<svg style="left:568.5px;top:453.5px;" width="11" height="16" viewBox="0 0 11 16"><path d="M.7 .8v12.200l2.900-2.700 2 4.500 1.700-.8-2-4.400h4z" fill="#fff" stroke="#222" stroke-width=".9" stroke-linejoin="round"/></svg>
<div class="abs" style="left:45.5px;top:487px;width:955px;height:200px;background:#fff;border:1px solid #eaeef7;border-radius:6px;"></div>
<div class="abs" style="left:57.7px;top:499px;width:770px;height:28.4px;background:#002b56;"></div>
<span class="t" style="top:508.18px;font-size:10.5px;color:#cfdbee;font-weight:700;left:107.7px;transform-origin:0 50%;transform:scaleX(0.8182);">QUESTION</span>
<span class="t" style="top:508.18px;font-size:10.5px;color:#cfdbee;font-weight:700;left:180px;transform-origin:0 50%;transform:scaleX(0.7879);">RESPONSE</span>
<span class="t" style="top:508.18px;font-size:10.5px;color:#cfdbee;font-weight:700;left:246.5px;transform-origin:0 50%;transform:scaleX(0.7703);">SCORE</span>
<span class="t" style="top:508.18px;font-size:10.5px;color:#cfdbee;font-weight:700;left:519px;transform-origin:0 50%;transform:scaleX(0.7940);">LEARNING TARGET</span>
<div class="abs" style="left:57.7px;top:527.4px;width:770px;height:29.4px;background:#fff;border-left:1px solid #e3e9f4;"></div>
<div class="abs" style="left:86.2px;top:527.4px;width:1px;height:29.4px;background:#e3e9f4;"></div>
<div class="abs" style="left:173.2px;top:527.4px;width:1px;height:29.4px;background:#e3e9f4;"></div>
<div class="abs" style="left:231.5px;top:527.4px;width:1px;height:29.4px;background:#e3e9f4;"></div>
<div class="abs" style="left:289.5px;top:527.4px;width:1px;height:29.4px;background:#e3e9f4;"></div>
<div class="abs" style="left:57.7px;top:556.8px;width:770px;height:1px;background:#dfe6f2;"></div>
<div class="abs" style="left:68.7px;top:541.5px;width:7.2px;height:2px;background:#10294d;"></div>
<span class="t" style="top:537.50px;font-size:12.5px;color:#333;font-family:&quot;Liberation Serif&quot;,serif;left:130px;transform-origin:50% 50%;transform:translateX(-50%) scaleX(1.0000);">1</span>
<svg style="left:195px;top:534.5px;" width="15" height="15" viewBox="0 0 15 15"><circle cx="7.500" cy="7.500" r="7.500" fill="#1fa267"/><path d="M4.200 7.700l2.300 2.300 4.300-4.500" fill="none" stroke="#fff" stroke-width="1.600" stroke-linecap="round" stroke-linejoin="round"/></svg>
<span class="t" style="top:536.40px;font-size:12.5px;color:#333;font-family:&quot;Liberation Serif&quot;,serif;left:260.2px;transform-origin:50% 50%;transform:translateX(-50%) scaleX(1.0000);">1</span>
<span class="t" style="top:536.59px;font-size:11.5px;color:#1f2d3d;left:302px;transform-origin:0 50%;transform:scaleX(0.9505);">Understand quadratic equations and complex numbers.</span>
<div class="abs" style="left:57.7px;top:557.8px;width:770px;height:90px;background:#f1f5fc;"></div>
<div class="abs" style="left:64.5px;top:564.5px;width:449px;height:90px;background:#fff;border-radius:6px;border:1px solid #edf1f8;"></div>
<div class="abs" style="left:520.5px;top:564px;width:300.5px;height:90px;background:#fff;border-radius:6px;border:1px solid #e7ecf6;"></div>
<span class="t" style="top:594.18px;font-size:10.5px;color:#2a2a2a;left:98.7px;transform-origin:0 50%;transform:scaleX(0.9630);">Solve the inequality algebraically.</span>
<span class="t" style="top:618.20px;font-size:12.5px;color:#4d4d4d;font-family:&quot;Liberation Serif&quot;,serif;left:98.2px;transform-origin:0 50%;"><i>x</i><sup style="font-size:8.500px;line-height:0;position:relative;top:-.5px">2</sup> + 10<i>x</i> + 9 &lt; 0</span>
<span class="t" style="top:576.39px;font-size:16px;color:#1d3a5f;left:617.5px;transform-origin:0 50%;transform:scaleX(0.9267);">Support Options</span>
<div class="abs" style="left:521.5px;top:592.3px;width:298.5px;height:1px;background:#e7ecf6;"></div>
<svg style="left:532.3px;top:605px;" width="17" height="16" viewBox="0 0 17 16"><path d="M8.500 0l2.600 4.300h-5.200z" fill="#a3282a"/><rect x="3.4" y="6.3" width="4" height="4" rx=".8" fill="#a3282a"/><rect x="9.7" y="6.3" width="4" height="4" rx=".8" fill="#a3282a"/><rect x="0.2" y="11.8" width="4" height="4" rx=".8" fill="#a3282a"/><rect x="6.5" y="11.8" width="4" height="4" rx=".8" fill="#a3282a"/><rect x="12.8" y="11.8" width="4" height="4" rx=".8" fill="#a3282a"/></svg>
<span class="t" style="top:608.39px;font-size:11.5px;color:#1d3a5f;left:555.4px;transform-origin:0 50%;transform:scaleX(0.9757);">Interpreting Functions</span>
<span class="t" style="top:635.99px;font-size:11.5px;color:#1d3a5f;left:555.2px;transform-origin:0 50%;transform:scaleX(0.9502);">Solve quadratic inequalities in one variable.</span>
<div class="abs" style="left:828px;top:499px;width:6.5px;height:147px;background:#fff;"></div>
<svg style="left:829.8px;top:500.4px;" width="4.4" height="3" viewBox="0 0 4.4 3"><path d="M0 3l2.200-3 2.200 3z" fill="#8a8a8a"/></svg>
<div class="abs" style="left:830px;top:506.5px;width:4.2px;height:140px;background:#7b7b7b;border-radius:2px 2px 0 0;"></div>
<div class="abs" style="left:1013.5px;top:211px;width:11.5px;height:435px;background:#fcfcfc;"></div>
<svg style="left:1014.8px;top:214.8px;" width="7" height="4.5" viewBox="0 0 7 4.5"><path d="M0 4.500l3.500-4.500 3.500 4.500z" fill="#8a8a8a"/></svg>
<div class="abs" style="left:1015.5px;top:262px;width:6.2px;height:214.5px;background:#8c8c8c;border-radius:3px;"></div>
<svg style="left:1014.8px;top:637.5px;" width="7" height="4.5" viewBox="0 0 7 4.5"><path d="M0 0l3.500 4.500 3.500-4.500z" fill="#8a8a8a"/></svg>
</div><div class="blur"><div class="abs" style="left:32px;top:646px;width:993px;height:32px;background:#f0f0f0;"></div>
<div class="abs" style="left:32px;top:646px;width:993px;height:1px;background:#cfcfcf;"></div>
<svg style="left:46px;top:650px;" width="24" height="22" viewBox="0 0 24 22"><path d="M1 12.500l13-2.500 2.500 8-13 3z" fill="#5b3fb8"/><circle cx="14.600" cy="6" r="5.200" fill="#b3261e"/><path d="M14.600 3.200v3.600" stroke="#fff" stroke-width="1.300"/></svg>
<span class="t" style="top:652.36px;font-size:9.5px;color:#222;left:70.5px;transform-origin:0 50%;transform:scaleX(0.8958);">Top Stories</span>
<span class="t" style="top:664.36px;font-size:9.5px;color:#5a5a5a;left:70.5px;transform-origin:0 50%;transform:scaleX(0.9231);">US touts 'produc...</span>
<svg style="left:312px;top:655px;" width="17" height="17" viewBox="0 0 17 17"><defs><linearGradient id="w11" x1="0" y1="0" x2="1" y2="1"><stop offset="0" stop-color="#35b5f2"/><stop offset="1" stop-color="#0b78d0"/></linearGradient></defs><rect x="0" y="0" width="7.900" height="7.900" rx=".6" fill="url(#w11)"/><rect x="0" y="8.9" width="7.900" height="7.900" rx=".6" fill="url(#w11)"/><rect x="8.9" y="0" width="7.900" height="7.900" rx=".6" fill="url(#w11)"/><rect x="8.9" y="8.9" width="7.900" height="7.900" rx=".6" fill="url(#w11)"/></svg>
<div class="abs" style="left:338.7px;top:653px;width:158.5px;height:21.5px;background:#fbfbfb;border:1px solid #e2e2e2;border-radius:11px;"></div>
<svg style="left:346px;top:658px;" width="11.5" height="11.5" viewBox="0 0 11.5 11.5"><circle cx="4.600" cy="4.600" r="3.700" fill="none" stroke="#333" stroke-width="1.300"/><path d="M7.400 7.400l3.300 3.300" stroke="#333" stroke-width="1.500" stroke-linecap="round"/></svg>
<span class="t" style="top:658.92px;font-size:10px;color:#777;left:365px;transform-origin:0 50%;transform:scaleX(0.9156);">Search</span>
<svg style="left:505.5px;top:655.5px;" width="18.5" height="15.5" viewBox="0 0 18.5 15.5"><rect x="6" y="0" width="12" height="11" rx="1.200" fill="#e3e3e3" stroke="#fff" stroke-width=".6"/><rect x="0" y="4.500" width="12" height="11" rx="1.200" fill="#1a1a1a"/><rect x="6" y="4.500" width="6" height="6.500" fill="#8f8f8f"/></svg>
<svg style="left:537.5px;top:655px;" width="18" height="17.5" viewBox="0 0 18 17.5"><defs><linearGradient id="eg" x1="0" y1="0" x2="1" y2="1"><stop offset="0" stop-color="#35c1f1"/><stop offset=".6" stop-color="#1b8ad6"/><stop offset="1" stop-color="#0c59a4"/></linearGradient></defs><circle cx="9" cy="8.700" r="8.600" fill="url(#eg)"/><path d="M1 10c.5-5 5-7.500 9-6 3 1.200 4 4 3.200 6h-6.200c-.5 2.500 2 5 6 4-3 3.800-11 3-12-4z" fill="#1dbf7f" opacity=".85"/><circle cx="9.500" cy="9.800" r="2.600" fill="#f0f0f0"/><rect x="1" y="10.500" width="7" height="5.500" rx="1" fill="#c07a1c"/></svg>
<svg style="left:569.5px;top:655px;" width="18.5" height="17.5" viewBox="0 0 18.5 17.5"><path d="M5 1h7c2 0 3 1 3.500 3l2 8c.5 2-1 3.500-3 3.500h-9c-2.500 0-4-2-3.500-4l1.500-8c.3-1.500 0-2.500 1.500-2.500z" fill="#2a8be6"/><path d="M5 1h5l-3 14h-3.500c-2 0-3.500-1.500-3-3.500z" fill="#1db4a6"/><path d="M11 1h1.500c2 0 3 1.200 3.400 3l1.800 7c.6 2.500-1 4.500-3.200 4.500h-6z" fill="#9a54e0"/><path d="M9 3.500l5 0 1.500 6-3 3z" fill="#f5a03c" opacity=".85"/><rect x="4.500" y="11.500" width="12" height="5.500" rx="1" fill="#222"/><text x="10.500" y="16" font-size="4.500" fill="#fff" text-anchor="middle" font-family="Liberation Sans, sans-serif">M365</text></svg>
<svg style="left:601px;top:655.5px;" width="18.5" height="15.5" viewBox="0 0 18.5 15.5"><path d="M0 1.500a1.200 1.200 0 0 1 1.200-1.200h5l1.800 2h9.300a1.200 1.200 0 0 1 1.200 1.200v10.500a1.200 1.200 0 0 1-1.200 1.200h-16.100a1.200 1.200 0 0 1-1.200-1.200z" fill="#f5b800"/><rect x="0" y="4" width="18.500" height="8" rx="1" fill="#ffd65c"/><rect x="3" y="10.500" width="12.500" height="4.700" rx=".8" fill="#2b87d8"/></svg>
<svg style="left:633px;top:655px;" width="17.5" height="16.5" viewBox="0 0 17.5 16.5"><path d="M5.500 4v-1.800a1.500 1.500 0 0 1 1.500-1.500h3.500a1.500 1.500 0 0 1 1.500 1.500v1.800" fill="none" stroke="#2f7fd0" stroke-width="1.400"/><rect x="0" y="3.800" width="17.500" height="12.700" rx="2.200" fill="#0f5cb4"/><rect x="5" y="6.500" width="3.300" height="3.300" fill="#f25022"/><rect x="9.200" y="6.500" width="3.300" height="3.300" fill="#7fba00"/><rect x="5" y="10.700" width="3.300" height="3.300" fill="#00a4ef"/><rect x="9.200" y="10.700" width="3.300" height="3.300" fill="#ffb900"/></svg>
<svg style="left:667.5px;top:654px;" width="18" height="18" viewBox="0 0 18 18"><rect x="0" y="2" width="12" height="15" rx="1" fill="#fff" stroke="#c9c9c9" stroke-width=".8"/><circle cx="13" cy="3.800" r="4.600" fill="#3d7de0" stroke="#cfe0fb" stroke-width="1"/><circle cx="13" cy="2.800" r="1.400" fill="none" stroke="#fff" stroke-width=".8"/><path d="M10.500 6.300c.6-1.800 4.400-1.800 5 0" fill="none" stroke="#fff" stroke-width=".8"/></svg>
<div class="abs" style="left:672px;top:675px;width:4.5px;height:1.5px;background:#8a8a8a;border-radius:1px;"></div>
<svg style="left:697px;top:654px;" width="18" height="18" viewBox="0 0 18 18"><circle cx="6.500" cy="5" r="2.800" fill="#7b83eb"/><circle cx="12.500" cy="6" r="2" fill="#5b5fc7"/><rect x="9" y="8" width="7" height="7.500" rx="2.200" fill="#7b83eb"/><rect x="2.500" y="8" width="9" height="9.500" rx="2.400" fill="#5b5fc7"/><rect x="0" y="7.500" width="8" height="8" rx="1" fill="#4b53bc"/><text x="4" y="14" font-size="6.500" font-weight="700" fill="#fff" text-anchor="middle" font-family="Liberation Sans, sans-serif">T</text><circle cx="15.300" cy="3.400" r="4.700" fill="#c4262e"/><rect x="12.800" y="2.700" width="5" height="1.400" fill="#fff"/></svg>
<div class="abs" style="left:703.7px;top:675px;width:4.5px;height:1.5px;background:#8a8a8a;border-radius:1px;"></div>
<div class="abs" style="left:724.5px;top:650px;width:27.5px;height:27px;background:#fafafa;border:1px solid #e4e4e4;border-radius:3px;"></div>
<svg style="left:0px;top:0px;" width="1280" height="720" viewBox="0 0 1280 720"><circle cx="737.5" cy="664" r="8.6" fill="#fbc116"/><path d="M737.5 664L730.05 659.70A8.6 8.6 0 0 1 744.95 659.70z" fill="#e33b2e"/><path d="M737.5 664L737.50 672.60A8.6 8.6 0 0 1 730.05 659.70z" fill="#2ba24c"/><circle cx="737.5" cy="664" r="4.61648" fill="#fff"/><circle cx="737.5" cy="664" r="3.5948" fill="#3f83f1"/></svg>
<svg style="left:739.5px;top:650.5px;" width="11.5" height="11.5" viewBox="0 0 11.5 11.5"><circle cx="5.700" cy="5.700" r="5.700" fill="#5a4038"/><circle cx="5.700" cy="4.800" r="2.500" fill="#c78a5e"/><path d="M1.500 9.500c1-2.500 7.400-2.500 8.400 0a5.700 5.700 0 0 1-8.400 0z" fill="#3c5fae"/><path d="M2.800 3.500c1-2.700 5-2.700 6 .2-2-1-4-1-6-.2z" fill="#241815"/></svg>
<div class="abs" style="left:732.5px;top:675px;width:10.5px;height:1.8px;background:#0a66c2;border-radius:1px;"></div>
<svg style="left:844px;top:660.5px;" width="8.5" height="5.5" viewBox="0 0 8.5 5.5"><path d="M.6 5l3.650-4 3.650 4" fill="none" stroke="#222" stroke-width="1.200" stroke-linecap="round" stroke-linejoin="round"/></svg>
<div class="abs" style="left:860.4px;top:649.5px;width:21.6px;height:27.7px;background:#0a62c0;border-radius:2.500px;"></div>
<svg style="left:866.5px;top:656.5px;" width="9.5" height="14" viewBox="0 0 9.5 14"><rect x="2.700" y="0" width="4.100" height="8.200" rx="2.050" fill="#fff"/><path d="M.7 6.500a4.050 4.050 0 0 0 8.100 0M4.750 10.600v2.800" fill="none" stroke="#cfe4fb" stroke-width="1.100" stroke-linecap="round"/></svg>
<svg style="left:888.5px;top:658.5px;" width="12" height="9" viewBox="0 0 12 9"><path d="M.6 3.200a7.800 7.800 0 0 1 10.800 0M2.400 5.200a5.200 5.200 0 0 1 7.200 0M4.200 7.100a2.600 2.600 0 0 1 3.600 0" fill="none" stroke="#222" stroke-width="1"/><circle cx="6" cy="8.300" r=".8" fill="#222"/></svg>
<svg style="left:906px;top:658.5px;" width="12" height="9" viewBox="0 0 12 9"><path d="M.6 3h2l2.600-2.400v7.800l-2.600-2.400h-2z" fill="none" stroke="#222" stroke-width="1" stroke-linejoin="round"/><path d="M7 2.600a2.600 2.600 0 0 1 0 3.800M8.600 1.300a4.600 4.600 0 0 1 0 6.400M10.200 .2a6.400 6.400 0 0 1 0 8.600" fill="none" stroke="#222" stroke-width=".9"/></svg>
<svg style="left:923px;top:659.7px;" width="12.5" height="7.2" viewBox="0 0 12.5 7.2"><rect x=".5" y=".5" width="10" height="6.200" rx="1.400" fill="none" stroke="#222" stroke-width="1"/><rect x="1.800" y="1.800" width="5.200" height="3.600" rx=".5" fill="#222"/><path d="M11.300 2.500v2.200" stroke="#222" stroke-width="1.200" stroke-linecap="round"/></svg>
<span class="t" style="top:652.76px;font-size:9.5px;color:#333;right:288.4px;transform-origin:100% 50%;transform:scaleX(0.8857);">6:54 PM</span>
<span class="t" style="top:664.36px;font-size:9.5px;color:#333;right:288.4px;transform-origin:100% 50%;transform:scaleX(0.9362);">11/23/2025</span>
<svg style="left:998.7px;top:657.8px;" width="9.5" height="11" viewBox="0 0 9.5 11"><path d="M1 8c1-1 1.200-2 1.200-4a2.600 2.600 0 0 1 5.200 0c0 2 .2 3 1.200 4z" fill="#111"/><path d="M3.700 9c.3 1.400 2 1.400 2.300 0z" fill="#111"/><rect x="4.600" y="2" width="4.500" height="4" rx=".5" fill="#f0f0f0"/><text x="6.800" y="5.300" font-size="3.600" font-weight="700" fill="#111" text-anchor="middle" font-family="Liberation Sans, sans-serif">z</text></svg>
</div><div class="abs" style="left:12px;top:648px;width:96.5px;height:22px;background:rgba(84,84,84,.82);border-radius:3.500px;"></div>
<span class="t" style="top:653.84px;font-size:12px;color:#fff;font-weight:700;left:18px;transform-origin:0 50%;transform:scaleX(0.8550);-webkit-text-stroke:.3px rgba(84,84,84,.9);">Joshua Matthews</span>
<div class="abs" style="left:0px;top:683px;width:1280px;height:37px;background:#1d3220;"></div>
<svg style="left:15px;top:692.8px;" width="15.5" height="16" viewBox="0 0 15.5 16"><path d="M0 2.300l6.300-.9v6.100h-6.300zM7.100 1.300l8.400-1.200v7.400h-8.400zM0 8.300h6.300v6.100l-6.300-.9zM7.100 8.300h8.400v7.400l-8.400-1.200z" fill="#fff"/></svg>
<div class="abs" style="left:45px;top:683px;width:270px;height:37px;background:#f3f3f3;border-top:1px solid #dcdcdc;"></div>
<svg style="left:56px;top:693px;" width="16" height="17" viewBox="0 0 16 17"><circle cx="10.200" cy="6" r="4.600" fill="none" stroke="#222" stroke-width="1.300"/><path d="M6.900 9.400l-6 6.600" stroke="#222" stroke-width="1.400" stroke-linecap="round"/></svg>
<span class="t" style="top:694.82px;font-size:14.5px;color:#2b2b2b;left:82.7px;transform-origin:0 50%;transform:scaleX(0.9414);">Type here to search</span>
<svg style="left:249px;top:688px;" width="56" height="28" viewBox="0 0 56 28"><path d="M21.500 3c1 5.500 3.500 8 9 9-5.500 1-8 3.500-9 9-1-5.500-3.500-8-9-9 5.500-1 8-3.500 9-9z" fill="#f9b617"/><path d="M37.800 14.800c.5 2.700 1.700 3.900 4.400 4.400-2.700.5-3.900 1.700-4.400 4.400-.5-2.700-1.700-3.900-4.400-4.400 2.700-.5 3.900-1.700 4.400-4.400z" fill="#f9b617"/><path d="M5.500 18c.4 2 1.300 2.900 3.300 3.300-2 .4-2.900 1.300-3.300 3.300-.4-2-1.300-2.900-3.300-3.300 2-.4 2.900-1.300 3.300-3.300z" fill="#1e88e5"/><circle cx="32" cy="4.800" r="1.300" fill="#e8552a"/><circle cx="53" cy="23.500" r="1.400" fill="#5cb85c"/></svg>
<svg style="left:329.5px;top:693px;" width="16" height="15.5" viewBox="0 0 16 15.5"><rect x="1.800" y="2.600" width="8.600" height="5.400" fill="none" stroke="#fff" stroke-width="1.300"/><path d="M1.800 11.500h8.600M1.800 .7h8.600M1.800 14.600h8.600" fill="none" stroke="#fff" stroke-width="1.300"/><path d="M13.600 .5v14.500" fill="none" stroke="#fff" stroke-width="1.300"/><rect x="12.500" y="5.200" width="2.200" height="3" fill="#fff"/></svg>
<svg style="left:375px;top:692.5px;" width="20.5" height="17" viewBox="0 0 20.5 17"><path d="M0 1.600a1.300 1.300 0 0 1 1.300-1.300h5.500l2 2.200h10.400a1.300 1.300 0 0 1 1.300 1.300v11.700a1.300 1.300 0 0 1-1.300 1.300h-17.900a1.300 1.300 0 0 1-1.300-1.300z" fill="#f0b323"/><rect x="0" y="4.500" width="20.500" height="9" rx="1" fill="#fdd663"/><rect x="3.600" y="11.500" width="13.300" height="5.300" rx=".8" fill="#3b8fe0"/><rect x="7.500" y="14.200" width="5.500" height="2.600" fill="#fdd663"/></svg>
<svg style="left:0px;top:0px;" width="1280" height="720" viewBox="0 0 1280 720"><circle cx="431" cy="701" r="11" fill="#fbc116"/><path d="M431 701L421.47 695.50A11 11 0 0 1 440.53 695.50z" fill="#e33b2e"/><path d="M431 701L431.00 712.00A11 11 0 0 1 421.47 695.50z" fill="#2ba24c"/><circle cx="431" cy="701" r="5.9048" fill="#fff"/><circle cx="431" cy="701" r="4.598" fill="#3f83f1"/></svg>
<div class="abs" style="left:412px;top:718px;width:37.5px;height:2px;background:#f2c391;"></div>
<svg style="left:466px;top:690.7px;" width="20" height="20.5" viewBox="0 0 20 20.5"><defs><linearGradient id="wd" x1="0" y1="0" x2="0" y2="1"><stop offset="0" stop-color="#5ec6f5"/><stop offset=".5" stop-color="#2f86e6"/><stop offset="1" stop-color="#1746b8"/></linearGradient></defs><rect x="4.500" y="0" width="15.500" height="20.500" rx="3.500" fill="url(#wd)"/><rect x="0" y="8" width="10.500" height="10.500" rx="2.200" fill="#1a4fc0"/><text x="5.250" y="16" font-size="8" font-weight="700" fill="#fff" text-anchor="middle" font-family="Liberation Sans, sans-serif">W</text></svg>
<svg style="left:512.5px;top:691px;" width="20.5" height="20.7" viewBox="0 0 20.5 20.7"><rect width="20.500" height="20.700" rx="1.500" fill="#fbd310"/><path d="M20.500 10.500v8.700a1.500 1.500 0 0 1-1.500 1.500h-9z" fill="#3a3523"/><path d="M20.500 10.500h-8.500a1.500 1.500 0 0 0-1.500 1.500v8.700z" fill="#e3a90c" opacity=".0"/></svg>
<div class="abs" style="left:504.5px;top:718px;width:36.5px;height:2px;background:#f2c391;"></div>
<svg style="left:557.5px;top:691px;" width="22.5" height="20" viewBox="0 0 22.5 20"><rect x="6" y="0" width="16.500" height="20" rx="2" fill="#ae4bd5"/><rect x="15.500" y="0" width="7" height="6.700" fill="#c98be6"/><rect x="15.500" y="6.700" width="7" height="6.700" fill="#a43dcf"/><rect x="15.500" y="13.400" width="7" height="6.600" fill="#7a1fa6"/><rect x="0" y="4.500" width="12.500" height="11.500" rx="1.500" fill="#7719aa"/><text x="6.250" y="13.600" font-size="9.500" font-weight="700" fill="#fff" text-anchor="middle" font-family="Liberation Sans, sans-serif">N</text></svg>
<svg style="left:603px;top:693px;" width="23" height="17.5" viewBox="0 0 23 17.5"><path d="M6 2.300l1.500-2.300h8l1.500 2.300z" fill="#9c9c9c"/><rect x="0" y="2.300" width="23" height="15.200" rx="2.200" fill="#8d8f92"/><circle cx="11.500" cy="10" r="6.200" fill="#d9dde2"/><circle cx="11.500" cy="10" r="4.700" fill="#7a6ff0"/><circle cx="11.500" cy="10" r="4.700" fill="url(#cl)"/><defs><linearGradient id="cl" x1="0" y1="0" x2="1" y2="1"><stop offset="0" stop-color="#b26df2"/><stop offset="1" stop-color="#3aa0f5"/></linearGradient></defs></svg>
<svg style="left:650px;top:690.7px;" width="21" height="21" viewBox="0 0 21 21"><defs><linearGradient id="ph" x1="0" y1="0" x2="1" y2="1"><stop offset="0" stop-color="#1e6fe0"/><stop offset="1" stop-color="#39b6f5"/></linearGradient></defs><rect width="21" height="21" rx="3.500" fill="url(#ph)"/><circle cx="15.300" cy="5.500" r="1.800" fill="#e8f5ff"/><path d="M0 18l9.500-10.500 8 9.500v.5a3.500 3.500 0 0 1-3.500 3.500h-10.500a3.500 3.500 0 0 1-3.500-3z" fill="#7fd3fb"/><path d="M3 21l7.500-8 6.500 7z" fill="#1256b8"/></svg>
<svg style="left:697.5px;top:690px;" width="19" height="22.5" viewBox="0 0 19 22.5"><path d="M5 7c0-4 3-6.500 6.500-6.500s6.500 2.500 6.500 6.500c0 3-1.500 5.500-4 6.500" fill="none" stroke="#d8401f" stroke-width="3"/><path d="M7.200 6l4.300 10M13 4l-2.700 12" stroke="#e8e8e8" stroke-width="1.800" stroke-linecap="round"/><circle cx="4" cy="17" r="2.600" fill="none" stroke="#2ea3f2" stroke-width="1.700"/><circle cx="12.500" cy="19" r="2.600" fill="none" stroke="#2ea3f2" stroke-width="1.700"/></svg>
<div class="abs" style="left:730px;top:683px;width:45px;height:37px;background:#455a48;"></div>
<div class="abs" style="left:773.7px;top:683px;width:1.2px;height:37px;background:#5d6f60;"></div>
<div class="abs" style="left:730px;top:718px;width:45px;height:2px;background:#f2c391;"></div>
<svg style="left:741px;top:690.5px;" width="23" height="23" viewBox="0 0 23 23"><circle cx="8.500" cy="4" r="3.300" fill="#7b83eb"/><circle cx="16.300" cy="5.300" r="2.500" fill="#7b83eb"/><rect x="12" y="8" width="8.500" height="9.500" rx="2.600" fill="#7b83eb"/><rect x="3.500" y="8" width="11" height="12" rx="3" fill="#5b5fc7"/><rect x="0" y="7.800" width="9.800" height="9.800" rx="1.200" fill="#4b53bc"/><text x="4.900" y="15.700" font-size="8" font-weight="700" fill="#fff" text-anchor="middle" font-family="Liberation Sans, sans-serif">T</text><circle cx="17" cy="16.500" r="6.300" fill="#c50f1f" stroke="#e9e9e9" stroke-width="1.100"/></svg>
<svg style="left:787.5px;top:690px;" width="22.5" height="22.5" viewBox="0 0 22.5 22.5"><defs><linearGradient id="mu" x1="0" y1="0" x2="0" y2="1"><stop offset="0" stop-color="#fb5c74"/><stop offset="1" stop-color="#fa233b"/></linearGradient></defs><rect width="22.500" height="22.500" rx="5" fill="url(#mu)"/><path d="M8.800 6.300l7.400-1.700v9.500a2.100 1.800 0 1 1-1.300-1.650v-5.200l-4.800 1.100v7a2.100 1.800 0 1 1-1.300-1.650z" fill="#fff"/></svg>
<svg style="left:836px;top:693.7px;" width="16.6" height="16.6" viewBox="0 0 16.6 16.6"><g transform="translate(8.300 8.300)"><rect x="-1.900" y="-8.300" width="3.800" height="4" fill="#fff" transform="rotate(0)"/><rect x="-1.900" y="-8.300" width="3.800" height="4" fill="#fff" transform="rotate(45)"/><rect x="-1.900" y="-8.300" width="3.800" height="4" fill="#fff" transform="rotate(90)"/><rect x="-1.900" y="-8.300" width="3.800" height="4" fill="#fff" transform="rotate(135)"/><rect x="-1.900" y="-8.300" width="3.800" height="4" fill="#fff" transform="rotate(180)"/><rect x="-1.900" y="-8.300" width="3.800" height="4" fill="#fff" transform="rotate(225)"/><rect x="-1.900" y="-8.300" width="3.800" height="4" fill="#fff" transform="rotate(270)"/><rect x="-1.900" y="-8.300" width="3.800" height="4" fill="#fff" transform="rotate(315)"/><circle r="5" fill="none" stroke="#fff" stroke-width="3"/></g></svg>
<svg style="left:1048px;top:697px;" width="12" height="8" viewBox="0 0 12 8"><path d="M.8 7.200l5.200-5.600 5.200 5.600" fill="none" stroke="#fff" stroke-width="1.300"/></svg>
<svg style="left:1078px;top:693.7px;" width="11.5" height="16" viewBox="0 0 11.5 16"><rect x="3" y="0" width="5.500" height="10.500" rx="2.750" fill="#fff"/><path d="M.6 7.500a5.150 5.150 0 0 0 10.300 0M5.750 12.800v2.600M3 15.500h5.500" fill="none" stroke="#d5dbd6" stroke-width="1"/></svg>
<svg style="left:1110px;top:693.7px;" width="15.5" height="16.5" viewBox="0 0 15.5 16.5"><path d="M13.500 .8l1.300 1.100-8.600 11.800-2.200 1.300.6-2.600z" fill="none" stroke="#fff" stroke-width="1.100" stroke-linejoin="round"/><path d="M7.500 9.500c-3.500-2-7 .5-6.500 3.500.4 2 3 2.500 5 .5M9 8.500c2.500-1.500 6-.5 5.500 2-.3 1.300-2 2-4 1.500" fill="none" stroke="#fff" stroke-width="1.100"/></svg>
<span class="t" style="top:688.18px;font-size:10.5px;color:#fff;left:1153.2px;transform-origin:50% 50%;transform:translateX(-50%) scaleX(0.9261);">ENG</span>
<span class="t" style="top:704.38px;font-size:10.5px;color:#fff;left:1153.7px;transform-origin:50% 50%;transform:translateX(-50%) scaleX(0.9000);">US</span>
<span class="t" style="top:688.18px;font-size:10.5px;color:#fff;left:1200px;transform-origin:50% 50%;transform:translateX(-50%) scaleX(1.0256);">6:54 PM</span>
<span class="t" style="top:704.38px;font-size:10.5px;color:#fff;left:1200.3px;transform-origin:50% 50%;transform:translateX(-50%) scaleX(1.0442);">11/23/2025</span>
<svg style="left:1241.2px;top:693.7px;" width="16" height="14.5" viewBox="0 0 16 14.5"><path d="M.7 .7h14.600v10.300h-5l-2.300 2.600-2.300-2.600h-5z" fill="none" stroke="#fff" stroke-width="1.200" stroke-linejoin="round"/></svg>
<div class="abs" style="left:1275px;top:683px;width:1px;height:37px;background:#768579;"></div>
<div class="abs" style="left:1053.8px;top:276px;width:221px;height:123px;background:linear-gradient(158deg,#f5f0f5 0%,#eff3f1 38%,#e6f5ee 75%,#e1f5ea 100%);border:1px solid #d9e2dd;border-radius:5px;"></div>
<div class="abs" style="left:1134px;top:307px;width:61.5px;height:61.5px;background:#dde6ec;border-radius:50%;box-shadow:0 1.500px 4px rgba(0,0,0,.22);"></div>
<span class="t" style="top:325.99px;font-size:24px;color:#2c4d5e;font-weight:700;left:1148.2px;transform-origin:0 50%;transform:scaleX(0.9697);-webkit-text-stroke:.5px #dde6ec;">JM</span>
<div class="abs" style="left:1061.7px;top:369.7px;width:96.4px;height:22.3px;background:#6b706e;border-radius:3.500px;"></div>
<span class="t" style="top:375.44px;font-size:12px;color:#fff;font-weight:700;left:1067.4px;transform-origin:0 50%;transform:scaleX(0.8560);-webkit-text-stroke:.3px #6b706e;">Joshua Matthews</span>
<svg style="left:1055px;top:403.5px;" width="220.3" height="122" viewBox="0 0 220.3 122">
<defs>
<clipPath id="vc"><rect x="0" y="0" width="220.300" height="122" rx="5"/></clipPath>
<linearGradient id="vbg" x1="0" y1="0" x2="0" y2="1"><stop offset="0" stop-color="#c3a47d"/><stop offset=".22" stop-color="#caad87"/><stop offset=".45" stop-color="#d9c29d"/><stop offset=".68" stop-color="#d8bf99"/><stop offset=".8" stop-color="#cba579"/><stop offset="1" stop-color="#c0935f"/></linearGradient>
<filter id="b6" x="-40%" y="-40%" width="180%" height="180%"><feGaussianBlur stdDeviation="6"/></filter>
<filter id="b3" x="-40%" y="-40%" width="180%" height="180%"><feGaussianBlur stdDeviation="2.600"/></filter>
<filter id="b1" x="-20%" y="-20%" width="140%" height="140%"><feGaussianBlur stdDeviation="1"/></filter>
<filter id="b2" x="-20%" y="-20%" width="140%" height="140%"><feGaussianBlur stdDeviation="1.500"/></filter>
</defs>
<g clip-path="url(#vc)">
<rect width="220.300" height="122" fill="url(#vbg)"/>
<ellipse cx="112" cy="62" rx="70" ry="26" fill="#e0cba8" opacity=".6" filter="url(#b6)"/>
<ellipse cx="4" cy="14" rx="17" ry="34" fill="#94695b" filter="url(#b6)"/>
<ellipse cx="10" cy="62" rx="15" ry="18" fill="#e2b188" filter="url(#b6)"/>
<ellipse cx="200" cy="30" rx="30" ry="30" fill="#c8ab84" opacity=".7" filter="url(#b6)"/>
<ellipse cx="198" cy="112" rx="9" ry="16" fill="#ad7e52" opacity=".8" filter="url(#b6)"/>
<ellipse cx="160" cy="112" rx="14" ry="12" fill="#c89a68" opacity=".8" filter="url(#b6)"/>
<ellipse cx="38" cy="110" rx="17" ry="13" fill="#5d4033" filter="url(#b6)"/>
<ellipse cx="47.200" cy="52.200" rx="7.500" ry="5.500" fill="#fffaf0" filter="url(#b3)"/>
<ellipse cx="6" cy="47.600" rx="6" ry="6.500" fill="#f7f0de" filter="url(#b3)"/>
<ellipse cx="54.500" cy="80.600" rx="6.500" ry="5" fill="#fff6e8" filter="url(#b3)"/>
<ellipse cx="19.700" cy="79.700" rx="7.500" ry="5.500" fill="#f5dcc0" filter="url(#b3)"/>
<ellipse cx="58" cy="96" rx="5" ry="3" fill="#ecd2b2" filter="url(#b3)"/>
<ellipse cx="38" cy="6" rx="14" ry="5" fill="#e2cdb0" filter="url(#b3)"/>
<ellipse cx="181" cy="88.900" rx="7.500" ry="5.500" fill="#f8ead6" filter="url(#b3)"/>
<ellipse cx="216.700" cy="67.800" rx="4.500" ry="6" fill="#f5ead6" filter="url(#b3)"/>
<ellipse cx="210" cy="108" rx="4" ry="11" fill="#e3c79f" filter="url(#b3)"/>
<!-- striped object -->
<g filter="url(#b1)"><path d="M0 84l8.700-7 13.500 12-3.500 33h-18.700z" fill="#8f5f4e"/><path d="M1 92l6 30M6.500 82l6.500 40M13 85l4 37" stroke="#d9cbb3" stroke-width="2.200"/></g>
<!-- shirt -->
<path d="M33 122c8-13 18-19 30-22.500l26-3.500 47 1.500 24 6.500c10 4 17 10 21 18z" fill="#151514" filter="url(#b1)"/>
<!-- face -->
<g filter="url(#b1)">
<path d="M141 72c4-1 4.500 4 3.500 9s-2.500 8-4.500 8z" fill="#c9aea2"/>
<path d="M85 60h56c.8 12 .2 22-1.500 32-1 6-2.500 11-4.500 16l-4 14h-33l-5-14c-3-8-5.500-16-7-26-.9-8-1.200-15-1-22z" fill="#cdc0bd"/>
<path d="M87 78c0 14 4 28 10 40 3-12 0-28 3-40z" fill="#d8a380" opacity=".55" filter="url(#b3)"/>
<path d="M107 72c3 8 4 18 1.500 26 4 3 9 2.500 11.500-.5-2.500-8-1.500-18 .5-26z" fill="#ddd5d4" opacity=".7" filter="url(#b2)"/>
<path d="M122 102c6-4 10-12 13-22l-1 18-5 14z" fill="#bfa9a0" opacity=".45" filter="url(#b3)"/>
<ellipse cx="98" cy="74.600" rx="5.200" ry="1.900" fill="#61798a"/><ellipse cx="122" cy="74.600" rx="5.200" ry="1.900" fill="#61798a"/>
<path d="M91 70.300c4-2.200 9-2.200 13-.3M116.500 70c4-1.900 8.500-1.900 12.500.3" stroke="#5a4d42" stroke-width="1.500" fill="none"/>
<path d="M102 104.300c4-1.600 14-1.600 18.400 0-2.800 4.200-15.400 4.200-18.400 0z" fill="#bd8386"/>
<path d="M104 105.300h14" stroke="#7a4a50" stroke-width=".9"/>
</g>
<!-- hair -->
<g filter="url(#b2)">
<path d="M84 69c-5-5-8.300-11-8.300-19 .3-6 1-11 2.300-16 2-5 4.500-9 8-12 3-4 6.500-5.500 10-5.500 3.500.2 6 1.500 8 2.500 2.500 1.500 5 3 8 4.500 2.500-1.800 5-2.800 8-3 4.500-.5 8.500-.5 12 0 4.500 1 8.500 2.800 11 5.500 3 3.500 4.500 7.500 5 12 1.300 4 1.800 8 1.700 12-.5 4-1.700 7.500-3.700 10-1.500 3-3 6.500-5 10-1.200-3.500-3-6.200-5-8-2.500-1.500-5.200-2-8-2-2.800 2.800-5.500 5-8 6-2.400.8-4.600 1-6.500 1-2.800-1-5.200-2.500-7.500-4-2.600-1.600-5.300-2.800-8-3-2.800 0-5.500.2-8 1-2.200 1.500-4.200 3.800-6 7z" fill="#34352a"/>
<path d="M80 44c1-9 5-17 12-22M88 30c4-6 10-8 15-6" stroke="#7d7a60" stroke-width="2.400" fill="none" opacity=".8"/>
<path d="M118 26c5-3 12-3.500 18-1M96 40c5-5 11-6 16-4M124 40c5-3 10-3 14 0M100 54c4-3 9-4 13-2" stroke="#55564a" stroke-width="2" fill="none" opacity=".8"/>
</g>
</g>
<rect x=".4" y=".4" width="219.500" height="121.200" rx="5" fill="none" stroke="#e9e6e2" stroke-width=".8"/>
</svg>
</body>
</html>
